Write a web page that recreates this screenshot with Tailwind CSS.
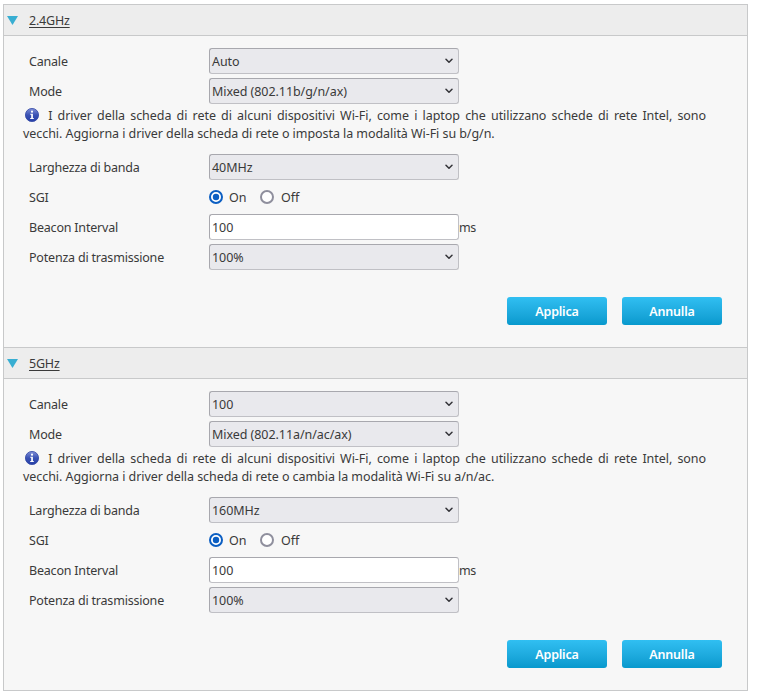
<!DOCTYPE html>
<html lang="it">
<head>
<meta charset="utf-8">
<title>Wi-Fi</title>
<script src="https://cdn.jsdelivr.net/npm/@tailwindcss/browser@4"></script>
</head>
<body class="bg-white text-[#3a3a3a] font-['Noto_Sans',sans-serif] text-[12.5px] leading-[18px] tracking-[-0.06px]">
<svg class="absolute h-0 w-0">
  <defs>
    <linearGradient id="ball" x1="0" y1="0" x2="0" y2="1"><stop offset="0" stop-color="#8090d8"/><stop offset=".5" stop-color="#3a52b4"/><stop offset="1" stop-color="#2740a8"/></linearGradient>
    <symbol id="info" viewBox="0 0 14 14"><circle cx="7" cy="7" r="6.6" fill="url(#ball)" stroke="#3148a6" stroke-width=".8"/><circle cx="7" cy="3.7" r="1.1" fill="#fff"/><path d="M5.3 5.7h2.6v4.2h.9v1H5.2v-1h1V6.7h-.9z" fill="#fff"/></symbol>
    <symbol id="chev" viewBox="0 0 8 6"><path d="M1 1.2 4 4.2 7 1.2" fill="none" stroke="#333338" stroke-width="1.5" stroke-linecap="round" stroke-linejoin="round"/></symbol>
    <symbol id="on" viewBox="0 0 14 14"><circle cx="7" cy="7" r="6" fill="#fff" stroke="#0b5ec2" stroke-width="2"/><circle cx="7" cy="7" r="3.2" fill="#0b5ec2"/></symbol>
    <symbol id="off" viewBox="0 0 14 14"><circle cx="7" cy="7" r="6" fill="#fff" stroke="#8f8f9d" stroke-width="2"/></symbol>
  </defs>
</svg>
<main class="ml-[3px] mt-1 w-[745px] border border-t-0 border-[#c8c9ca] bg-[#f7f7f7]">
  <section class="h-[343px] border-t border-[#c8c9ca]">
    <header class="flex h-[31px] items-center border-b border-[#c8c9ca] bg-[#ededed]">
      <svg class="ml-[3px] mr-[11px] h-[9px] w-[11px]" viewBox="0 0 11 9"><path d="M0 0h11L5.5 9z" fill="#38aed2"/></svg>
      <h2 class="pt-0.5 tracking-[-0.2px] underline underline-offset-2">2.4GHz</h2>
    </header>
    <div class="pt-3 pl-[25px]">
      <div class="flex h-[30px] items-start"><div class="w-[180px] pt-[5px] tracking-[-0.2px]">Canale</div><div class="flex h-[26px] w-[250px] items-center justify-between rounded-[3px] border border-[#c0c0c5] border-t-[#a8a8ae] border-l-[#a8a8ae] bg-[#e9e9ed] pl-0.5 pr-[5px]"><span class="pt-0.5">Auto</span><svg class="h-1.5 w-2"><use href="#chev"/></svg></div></div>
      <div class="flex h-[30px] items-start"><div class="w-[180px] pt-[5px] tracking-[-0.2px]">Mode</div><div class="flex h-[26px] w-[250px] items-center justify-between rounded-[3px] border border-[#c0c0c5] border-t-[#a8a8ae] border-l-[#a8a8ae] bg-[#e9e9ed] pl-0.5 pr-[5px]"><span class="pt-0.5">Mixed (802.11b/g/n/ax)</span><svg class="h-1.5 w-2"><use href="#chev"/></svg></div></div>
      <p class="-ml-[6px] -mt-px mb-[11px] w-[683px] text-justify"><svg class="ml-0.5 mr-1 inline-block h-3.5 w-3.5 align-[-2px]"><use href="#info"/></svg> I driver della scheda di rete di alcuni dispositivi Wi-Fi, come i laptop che utilizzano schede di rete Intel, sono vecchi. Aggiorna i driver della scheda di rete o imposta la modalità Wi-Fi su b/g/n.</p>
      <div class="flex h-[30px] items-start"><div class="w-[180px] pt-[5px] tracking-[-0.2px]">Larghezza di banda</div><div class="flex h-[26px] w-[250px] items-center justify-between rounded-[3px] border border-[#c0c0c5] border-t-[#a8a8ae] border-l-[#a8a8ae] bg-[#e9e9ed] pl-0.5 pr-[5px]"><span class="pt-0.5">40MHz</span><svg class="h-1.5 w-2"><use href="#chev"/></svg></div></div>
      <div class="flex h-[30px] items-start"><div class="w-[180px] pt-[5px] tracking-[-0.2px]">SGI</div><div class="flex h-[26px] items-center"><svg class="mr-1.5 h-3.5 w-3.5"><use href="#on"/></svg><span class="w-[31px] pt-0.5">On</span><svg class="mr-[7px] h-3.5 w-3.5"><use href="#off"/></svg><span class="pt-0.5">Off</span></div></div>
      <div class="flex h-[30px] items-start"><div class="w-[180px] pt-[5px] tracking-[-0.2px]">Beacon Interval</div><div class="flex h-[26px] w-[250px] items-center rounded-[3px] border border-[#c0c0c5] border-t-[#a8a8ae] border-l-[#a8a8ae] bg-white pl-0.5 pt-0.5">100</div><span class="pt-[5px] tracking-[-0.4px]">ms</span></div>
      <div class="flex h-[30px] items-start"><div class="w-[180px] pt-[5px] tracking-[-0.2px]">Potenza di trasmissione</div><div class="flex h-[26px] w-[250px] items-center justify-between rounded-[3px] border border-[#c0c0c5] border-t-[#a8a8ae] border-l-[#a8a8ae] bg-[#e9e9ed] pl-0.5 pr-[5px]"><span class="pt-0.5">100%</span><svg class="h-1.5 w-2"><use href="#chev"/></svg></div></div>
    </div>
    <div class="mt-[23px] flex justify-end gap-[15px] pr-[25px] font-semibold tracking-[-0.2px] text-white">
      <button class="h-7 w-[100px] rounded-[3px] bg-linear-to-b from-[#30bff2] to-[#0799cd] pt-0.5">Applica</button>
      <button class="h-7 w-[100px] rounded-[3px] bg-linear-to-b from-[#30bff2] to-[#0799cd] pt-0.5">Annulla</button>
    </div>
  </section>
  <section class="h-[343px] border-t border-[#c8c9ca]">
    <header class="flex h-[31px] items-center border-b border-[#c8c9ca] bg-[#ededed]">
      <svg class="ml-[3px] mr-[11px] h-[9px] w-[11px]" viewBox="0 0 11 9"><path d="M0 0h11L5.5 9z" fill="#38aed2"/></svg>
      <h2 class="pt-0.5 tracking-[-0.2px] underline underline-offset-2">5GHz</h2>
    </header>
    <div class="pt-3 pl-[25px]">
      <div class="flex h-[30px] items-start"><div class="w-[180px] pt-[5px] tracking-[-0.2px]">Canale</div><div class="flex h-[26px] w-[250px] items-center justify-between rounded-[3px] border border-[#c0c0c5] border-t-[#a8a8ae] border-l-[#a8a8ae] bg-[#e9e9ed] pl-0.5 pr-[5px]"><span class="pt-0.5">100</span><svg class="h-1.5 w-2"><use href="#chev"/></svg></div></div>
      <div class="flex h-[30px] items-start"><div class="w-[180px] pt-[5px] tracking-[-0.2px]">Mode</div><div class="flex h-[26px] w-[250px] items-center justify-between rounded-[3px] border border-[#c0c0c5] border-t-[#a8a8ae] border-l-[#a8a8ae] bg-[#e9e9ed] pl-0.5 pr-[5px]"><span class="pt-0.5">Mixed (802.11a/n/ac/ax)</span><svg class="h-1.5 w-2"><use href="#chev"/></svg></div></div>
      <p class="-ml-[6px] -mt-px mb-[11px] w-[683px] text-justify"><svg class="ml-0.5 mr-1 inline-block h-3.5 w-3.5 align-[-2px]"><use href="#info"/></svg> I driver della scheda di rete di alcuni dispositivi Wi-Fi, come i laptop che utilizzano schede di rete Intel, sono vecchi. Aggiorna i driver della scheda di rete o cambia la modalità Wi-Fi su a/n/ac.</p>
      <div class="flex h-[30px] items-start"><div class="w-[180px] pt-[5px] tracking-[-0.2px]">Larghezza di banda</div><div class="flex h-[26px] w-[250px] items-center justify-between rounded-[3px] border border-[#c0c0c5] border-t-[#a8a8ae] border-l-[#a8a8ae] bg-[#e9e9ed] pl-0.5 pr-[5px]"><span class="pt-0.5">160MHz</span><svg class="h-1.5 w-2"><use href="#chev"/></svg></div></div>
      <div class="flex h-[30px] items-start"><div class="w-[180px] pt-[5px] tracking-[-0.2px]">SGI</div><div class="flex h-[26px] items-center"><svg class="mr-1.5 h-3.5 w-3.5"><use href="#on"/></svg><span class="w-[31px] pt-0.5">On</span><svg class="mr-[7px] h-3.5 w-3.5"><use href="#off"/></svg><span class="pt-0.5">Off</span></div></div>
      <div class="flex h-[30px] items-start"><div class="w-[180px] pt-[5px] tracking-[-0.2px]">Beacon Interval</div><div class="flex h-[26px] w-[250px] items-center rounded-[3px] border border-[#c0c0c5] border-t-[#a8a8ae] border-l-[#a8a8ae] bg-white pl-0.5 pt-0.5">100</div><span class="pt-[5px] tracking-[-0.4px]">ms</span></div>
      <div class="flex h-[30px] items-start"><div class="w-[180px] pt-[5px] tracking-[-0.2px]">Potenza di trasmissione</div><div class="flex h-[26px] w-[250px] items-center justify-between rounded-[3px] border border-[#c0c0c5] border-t-[#a8a8ae] border-l-[#a8a8ae] bg-[#e9e9ed] pl-0.5 pr-[5px]"><span class="pt-0.5">100%</span><svg class="h-1.5 w-2"><use href="#chev"/></svg></div></div>
    </div>
    <div class="mt-[23px] flex justify-end gap-[15px] pr-[25px] font-semibold tracking-[-0.2px] text-white">
      <button class="h-7 w-[100px] rounded-[3px] bg-linear-to-b from-[#30bff2] to-[#0799cd] pt-0.5">Applica</button>
      <button class="h-7 w-[100px] rounded-[3px] bg-linear-to-b from-[#30bff2] to-[#0799cd] pt-0.5">Annulla</button>
    </div>
  </section>
</main>
</body>
</html>
